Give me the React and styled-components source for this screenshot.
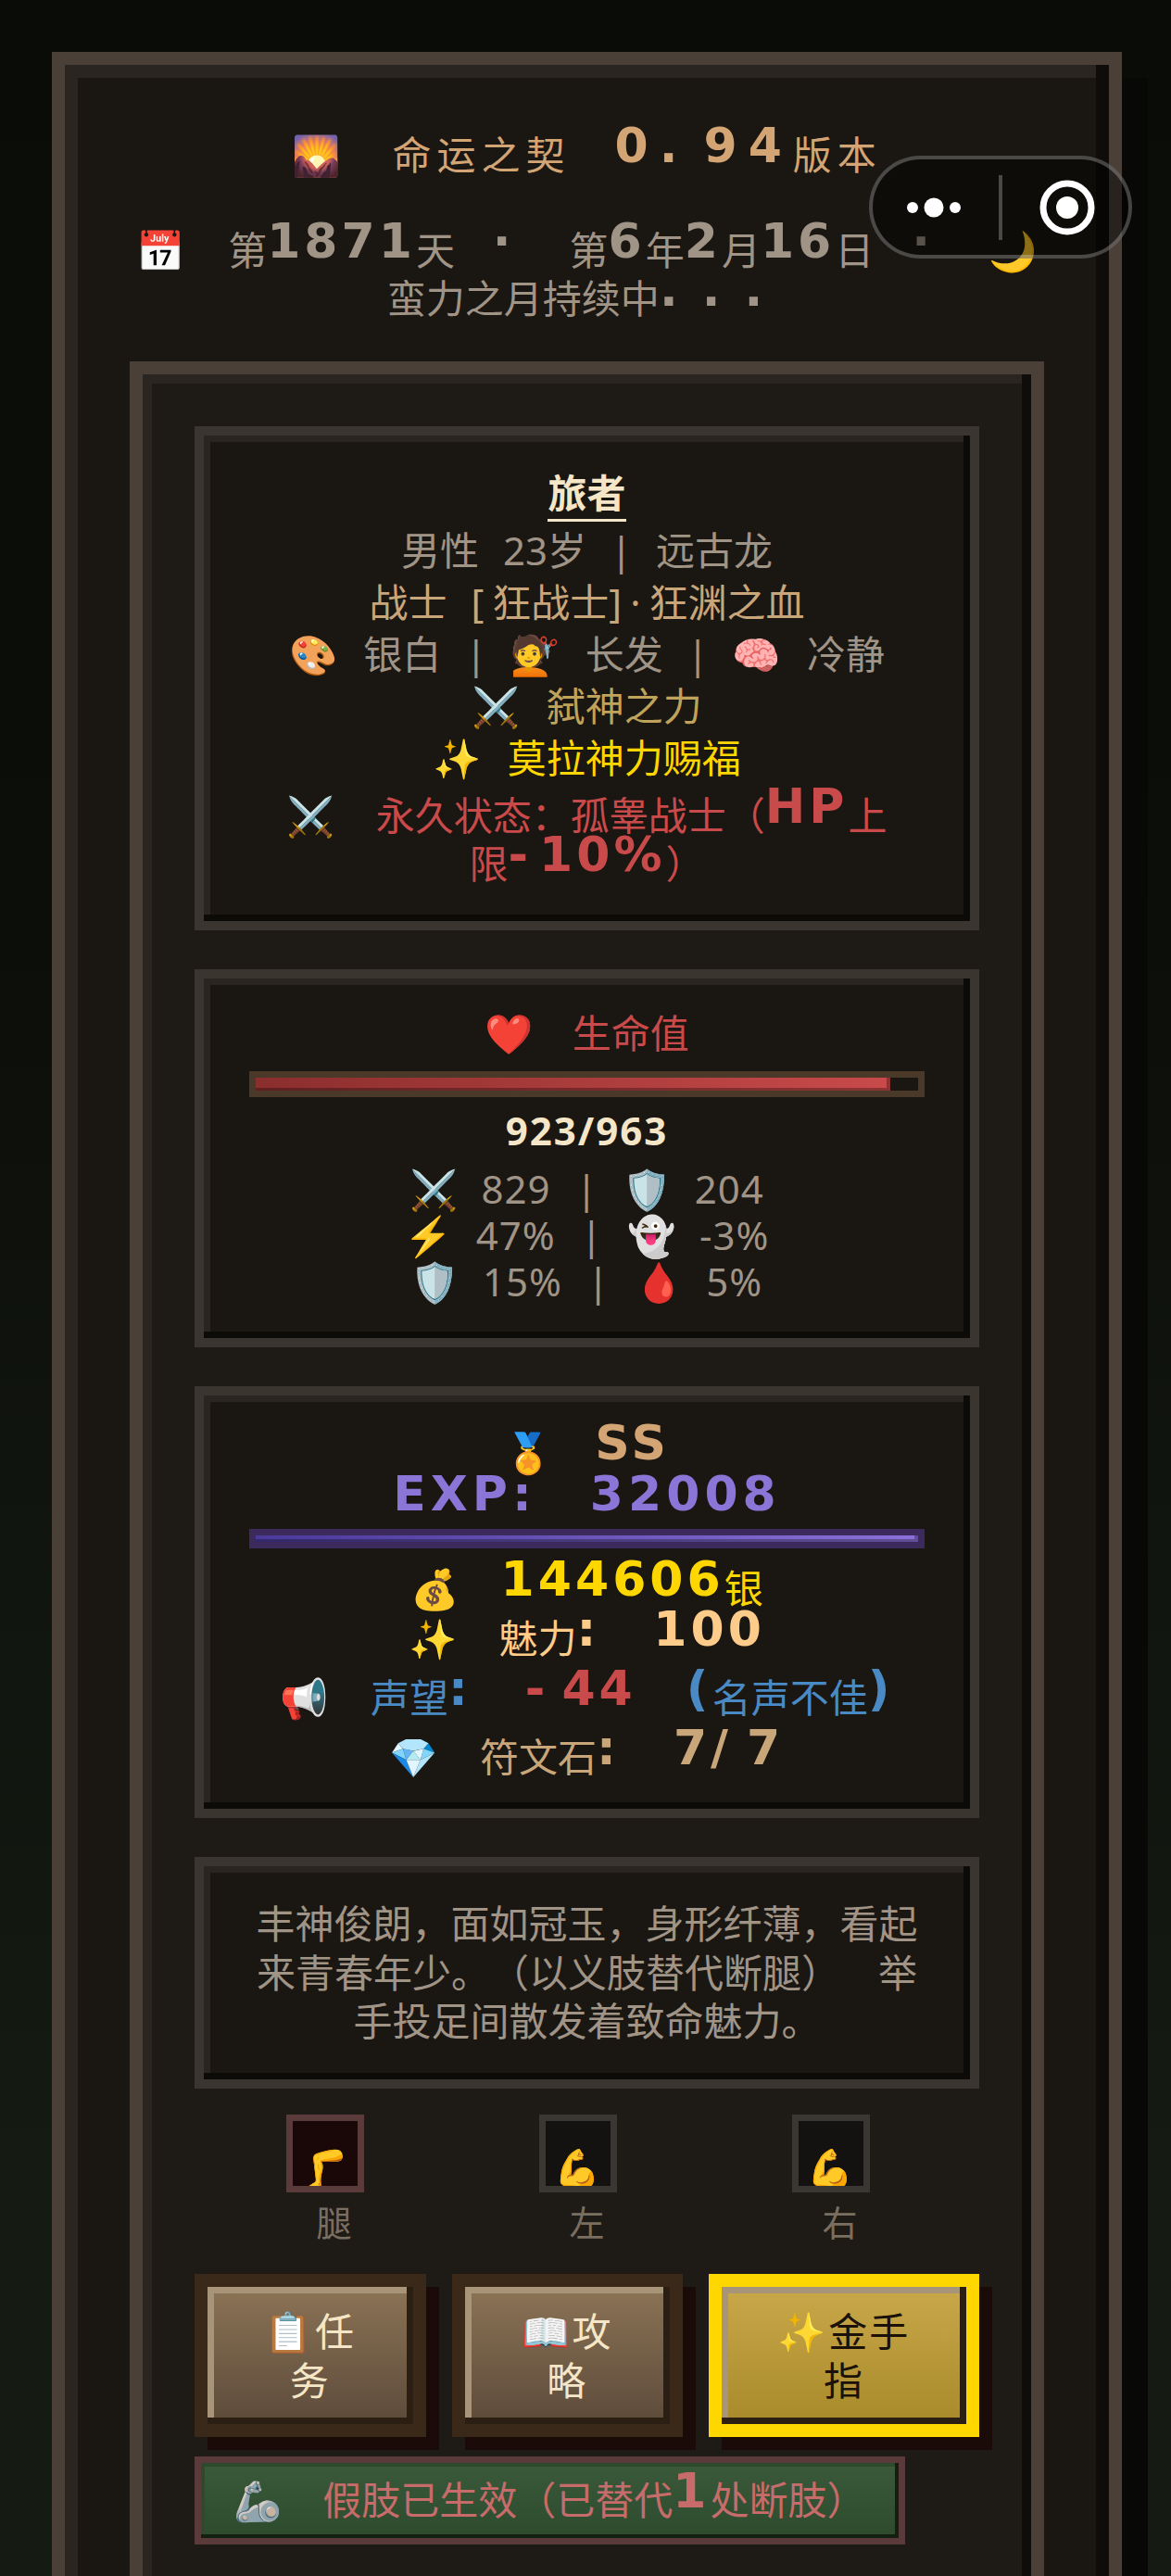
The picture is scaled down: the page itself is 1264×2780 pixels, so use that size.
import React from "react";
import styled, { createGlobalStyle } from "styled-components";

const GlobalStyle = createGlobalStyle`
  html, body {
    margin: 0;
    padding: 0;
    height: 2780px;
    overflow: hidden;
    background: #0a0c08;
  }
  * {
    box-sizing: border-box;
  }
`;

const Page = styled.div`
  width: 1264px;
  height: 2780px;
  overflow: hidden;
  padding: 56px 53px 0 56px;
  background: linear-gradient(180deg, #0a0c08 0%, #0b0d09 30%, #151a13 85%);
  font-family: "Noto Sans", "Noto Sans CJK SC", "Noto Color Emoji", sans-serif;
  font-size: 42px;
  word-spacing: 15px;
  text-spacing-trim: space-all;
  color: #a09486;
`;

const OuterPanel = styled.div`
  min-height: 2800px;
  padding: 70px;
  background: #1a1612;
  border: 14px solid #4a4038;
  box-shadow: 28px 28px 0 #080806, inset -14px -14px 0 #0f0c09,
    inset 14px 14px 0 #2a2520;
`;

const Header = styled.header`
  margin-bottom: 42px;
  text-align: center;
`;

const Title = styled.div`
  height: 104px;
  line-height: 54px;
  color: #d4a574;
  letter-spacing: 6px;
`;

const DateLine = styled.div`
  line-height: 52px;
  word-spacing: 30px;
`;

const Pixel = styled.span`
  font-family: "DejaVu Sans", sans-serif;
  font-weight: 700;
  font-size: 52px;
  line-height: 0;
  letter-spacing: ${(p) => p.$ls ?? 4}px;
  word-spacing: ${(p) => p.$ws ?? 18}px;
  vertical-align: 8px;
  color: ${(p) => p.$color ?? "inherit"};
`;

const Emo = styled.span`
  margin-right: ${(p) => p.$gap ?? 28}px;
  letter-spacing: 0;
`;

const Wide = styled.span`
  letter-spacing: 9px;
`;

const MiddlePanel = styled.div`
  min-height: 2500px;
  padding: 56px;
  background: #1e1a15;
  border: 14px solid #4a4038;
  box-shadow: inset -10px -10px 0 #0f0c09, inset 10px 10px 0 #2a2520;
`;

const Card = styled.section`
  margin-bottom: 42px;
  padding: 36px 49px;
  background: #1a1612;
  border: 10px solid #3a352e;
  box-shadow: inset -7px -7px 0 #0d0b08, inset 7px 7px 0 #2a2520;
  text-align: center;
`;

const Line = styled.div`
  margin-top: ${(p) => p.$mt ?? 0}px;
  line-height: ${(p) => p.$lh ?? 56}px;
  letter-spacing: ${(p) => p.$ls ?? 0}px;
  color: ${(p) => p.$color ?? "inherit"};
  font-weight: ${(p) => (p.$bold ? 700 : 400)};
`;

const StatLine = styled(Line)`
  line-height: 50px;
  letter-spacing: 1px;

  & ${Emo} {
    margin-right: 25px;
  }
`;

const Name = styled.span`
  color: #f5e6c8;
  font-weight: 700;
  border-bottom: 3px solid #f5e6c8;
`;

const Bar = styled.div`
  height: ${(p) => p.$h}px;
  margin: ${(p) => p.$margin};
  background: ${(p) => p.$track};
  border: 7px solid ${(p) => p.$frame};
`;

const Fill = styled.div`
  height: 100%;
  background: ${(p) => p.$fill};
  box-shadow: inset -4px -3px 0 rgba(0, 0, 0, 0.3);
`;

const Desc = styled.p`
  margin: 0;
  line-height: 52.5px;
  word-spacing: 30px;
`;

const Slots = styled.div`
  display: flex;
  justify-content: center;
  margin: -14px 0 31px;
`;

const SlotColumn = styled.div`
  width: 273px;
  display: flex;
  flex-direction: column;
  align-items: center;
`;

const Slot = styled.div`
  width: 84px;
  height: 84px;
  margin-right: 20px;
  display: flex;
  align-items: flex-end;
  justify-content: center;
  overflow: hidden;
  line-height: 1;
  font-size: 40px;
  background: ${(p) => (p.$broken ? "#1a0808" : "#141210")};
  border: 7px solid ${(p) => (p.$broken ? "#5a3a3a" : "#3a3632")};
`;

const SlotLabel = styled.div`
  margin-top: 7px;
  line-height: 50px;
  font-size: 38px;
  color: #7a6e60;
`;

const Buttons = styled.div`
  display: grid;
  grid-template-columns: 1fr 1fr 292px;
  gap: 28px;
  margin-bottom: 21px;
`;

const Button = styled.div`
  height: 176px;
  padding-top: 21px;
  text-align: center;
  line-height: 53px;
  letter-spacing: 2px;
  color: ${(p) => (p.$gold ? "#1a1209" : "#f5e6c8")};
  background: linear-gradient(
    180deg,
    ${(p) => (p.$gold ? "#c9a84a, #a88a2a" : "#8b7355, #5c4a3a")}
  );
  border: 14px solid ${(p) => (p.$gold ? "#ffd700" : "#3a2818")};
  box-shadow: 14px 14px 0 #1a0a08, inset -7px -7px 0 #2a1f12,
    inset 7px 7px 0 #a89478;
`;

const Status = styled.div`
  display: inline-block;
  height: 95px;
  padding: 0 35px 0 35px;
  line-height: 80px;
  color: #c76b6b;
  white-space: nowrap;
  background: linear-gradient(180deg, #3a5a3a, #2d4a2d);
  border: 7px solid #5a3a3a;
  box-shadow: inset -4px -4px 0 #14200f, inset 4px 4px 0 #2d4a2d;
`;

const Capsule = styled.div`
  position: absolute;
  left: 938px;
  top: 168px;
  width: 284px;
  height: 111px;
  display: flex;
  align-items: center;
  background: rgba(0, 0, 0, 0.45);
  border: 4px solid rgba(255, 255, 255, 0.25);
  border-radius: 56px;
`;

const CapsuleIcon = styled.svg`
  display: block;
  width: 276px;
  height: 103px;
`;

const App = () => (
  <Page>
    <GlobalStyle />
    <OuterPanel>
      <Header>
        <Title>
          <Emo $gap={56}>🌄</Emo>命运之契
          <Pixel $ls={12}> 0</Pixel>
          <Pixel $ls={28}>.</Pixel>
          <Pixel $ls={12}>94</Pixel>版本
        </Title>
        <DateLine>
          <Emo $gap={46}>📅</Emo>第<Pixel>1871</Pixel>天 <Pixel $ls={22}>·</Pixel> 第<Pixel>6</Pixel>年<Pixel>2</Pixel>月<Pixel>16</Pixel>日 <Pixel $ls={22}>·</Pixel> <Emo $gap={0}>🌙</Emo>
        </DateLine>
        <DateLine>
          蛮力之月持续中<Pixel $ls={26}>...</Pixel>
        </DateLine>
      </Header>

      <MiddlePanel>
        <Card>
          <Line $lh={52}>
            <Name>旅者</Name>
          </Line>
          <Line $mt={8}>男性 23岁 | 远古龙</Line>
          <Line $color="#c9a67a">
            战士 <Wide>[</Wide>狂战士<Wide>]·</Wide>狂渊之血
          </Line>
          <Line>
            <Emo>🎨</Emo>银白 | <Emo>💇</Emo>长发 | <Emo>🧠</Emo>冷静
          </Line>
          <Line $color="#bfa35a">
            <Emo>⚔️</Emo>弑神之力
          </Line>
          <Line $color="#ffd700">
            <Emo>✨</Emo>莫拉神力赐福
          </Line>
          <Line $mt={8} $lh={52} $color="#c94a4a">
            <Emo $gap={44}>⚔️</Emo>永久状态：孤睾战士（<Pixel>HP</Pixel>上限<Pixel $ls={12}>-</Pixel><Pixel>10%</Pixel>）
          </Line>
        </Card>

        <Card>
          <Line $lh={46} $color="#c94a4a">
            <Emo $gap={42}>❤️</Emo>生命值
          </Line>
          <Bar $h={28} $margin="18px 0 0" $frame="#4a3828" $track="#1a1612">
            <Fill
              $fill="linear-gradient(90deg, #8b2e2e, #c94a4a)"
              style={{ width: `${(923 / 963) * 100}%` }}
            />
          </Bar>
          <Line $bold $mt={8} $ls={2} $color="#f5e6c8">
            923/963
          </Line>
          <StatLine $mt={10}>
            <Emo>⚔️</Emo>829 | <Emo>🛡️</Emo>204
          </StatLine>
          <StatLine>
            <Emo>⚡</Emo>47% | <Emo>👻</Emo>-3%
          </StatLine>
          <StatLine>
            <Emo>🛡️</Emo>15% | <Emo>🩸</Emo>5%
          </StatLine>
        </Card>

        <Card>
          <Line $lh={50} $color="#d4a574">
            <Emo $gap={46}>🏅</Emo>
            <Pixel>SS</Pixel>
          </Line>
          <Line $mt={9} $lh={42} $color="#8b75d7">
            <Pixel $ls={5}>EXP</Pixel>
            <Pixel $ls={22}>:</Pixel>
            <Pixel $ls={5}> 32008</Pixel>
          </Line>
          <Bar $h={21} $margin="7px 0 17px" $frame="#3d2a5c" $track="#2a1a4a">
            <Fill $fill="linear-gradient(90deg, #4a3a9a, #8a70d8)" />
          </Bar>
          <Line $lh={52} $color="#ffd700">
            <Emo $gap={45}>💰</Emo>
            <Pixel>144606</Pixel>银
          </Line>
          <Line $lh={55} $color="#fdcb8a">
            <Emo $gap={45}>✨</Emo>魅力<Pixel $ls={22}>:</Pixel>
            <Pixel> 100</Pixel>
          </Line>
          <Line $mt={6} $lh={62} $color="#4a8ac4">
            <Emo $gap={45}>📢</Emo>声望<Pixel $ls={22}>:</Pixel>
            <Pixel> </Pixel>
            <Pixel $ls={18} $color="#c94a4a">-</Pixel>
            <Pixel $color="#c94a4a">44</Pixel>
            <Pixel $ws={32}> (</Pixel>名声不佳<Pixel>)</Pixel>
          </Line>
          <Line $mt={13} $lh={40} $color="#c9a67a">
            <Emo $gap={45}>💎</Emo>符文石<Pixel $ls={22}>:</Pixel>
            <Pixel> 7</Pixel>
            <Pixel $ls={20}>/</Pixel>
            <Pixel>7</Pixel>
          </Line>
        </Card>

        <Card>
          <Desc>
            丰神俊朗，面如冠玉，身形纤薄，看起来青春年少。（以义肢替代断腿） 举手投足间散发着致命魅力。
          </Desc>
        </Card>

        <Slots>
          <SlotColumn>
            <Slot $broken>🦵</Slot>
            <SlotLabel>腿</SlotLabel>
          </SlotColumn>
          <SlotColumn>
            <Slot>💪</Slot>
            <SlotLabel>左</SlotLabel>
          </SlotColumn>
          <SlotColumn>
            <Slot>💪</Slot>
            <SlotLabel>右</SlotLabel>
          </SlotColumn>
        </Slots>

        <Buttons>
          <Button>
            📋任
            <br />务
          </Button>
          <Button>
            📖攻
            <br />略
          </Button>
          <Button $gold>
            ✨金手
            <br />指
          </Button>
        </Buttons>

        <Status>
          <Emo $gap={44}>🦾</Emo>假肢已生效（已替代<Pixel>1</Pixel>处断肢）
        </Status>
      </MiddlePanel>
    </OuterPanel>

    <Capsule>
      <CapsuleIcon viewBox="0 0 276 103">
        <circle cx="43" cy="52" r="6" fill="#fff" />
        <circle cx="66" cy="52" r="10.5" fill="#fff" />
        <circle cx="89" cy="52" r="6" fill="#fff" />
        <rect x="136" y="17" width="4" height="70" fill="rgba(255,255,255,0.25)" />
        <circle cx="210" cy="52" r="26" fill="none" stroke="#fff" strokeWidth="7" />
        <circle cx="210" cy="52" r="12" fill="#fff" />
      </CapsuleIcon>
    </Capsule>
  </Page>
);

export default App;
